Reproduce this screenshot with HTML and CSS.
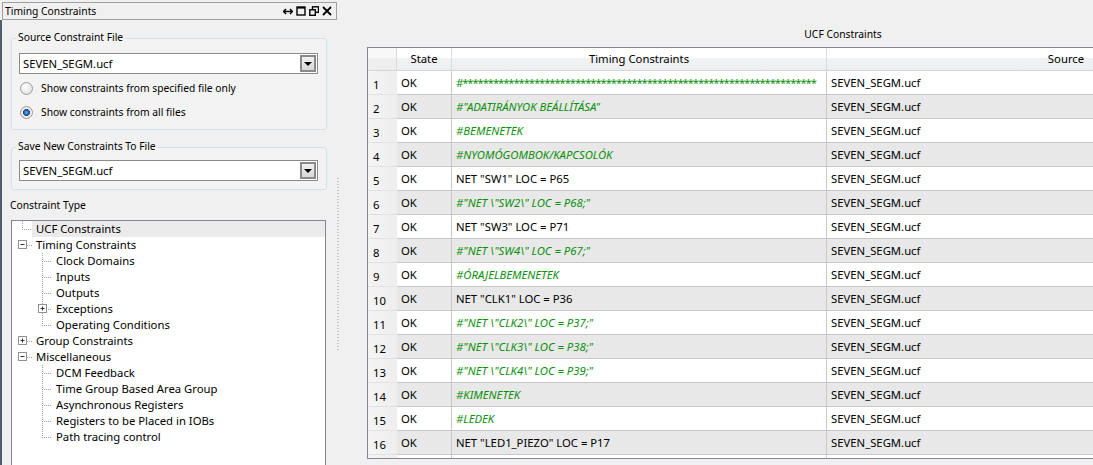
FILE: index.html
```html
<!DOCTYPE html>
<html lang="en">
<head>
  <meta charset="UTF-8" />
  <title>Timing Constraints</title>
  <link rel="stylesheet" href="styles.css">
</head>
<body>
  <div class="app">
    <aside class="dock">
      <div class="dock-title">
        <span>Timing Constraints</span>
        <span class="dock-btns">
          <svg width="10" height="9" viewBox="0 0 10 9"><path d="M0.5 4.5h9M3 2L0.5 4.5 3 7M7 2l2.5 2.5L7 7" fill="none" stroke="#000" stroke-width="1.4"/></svg>
          <svg width="10" height="10" viewBox="0 0 10 10"><rect x="1" y="1" width="8" height="8" fill="none" stroke="#000" stroke-width="1.4"/><path d="M1 1.8h8" stroke="#000" stroke-width="1.6"/></svg>
          <svg width="10" height="10" viewBox="0 0 10 10"><rect x="3.5" y="0.8" width="6" height="5.5" fill="none" stroke="#000" stroke-width="1.4"/><rect x="0.8" y="3.8" width="5.5" height="5.5" fill="#f0f0f0" stroke="#000" stroke-width="1.4"/></svg>
          <svg width="10" height="10" viewBox="0 0 10 10"><path d="M1 1l8 8M9 1L1 9" stroke="#000" stroke-width="1.8"/></svg>
        </span>
      </div>
      <div class="dock-body">
        <fieldset class="group">
          <legend>Source Constraint File</legend>
          <div class="combo"><span>SEVEN_SEGM.ucf</span><span class="combo-btn"></span></div>
          <label class="radio-row"><span class="radio"></span>Show constraints from specified file only</label>
          <label class="radio-row"><span class="radio checked"></span>Show constraints from all files</label>
        </fieldset>
        <fieldset class="group">
          <legend>Save New Constraints To File</legend>
          <div class="combo"><span>SEVEN_SEGM.ucf</span><span class="combo-btn"></span></div>
        </fieldset>
        <div class="section-label">Constraint Type</div>
        <div class="tree">
          <div class="node sel"><span class="cell end"></span><span class="label">UCF Constraints</span></div>
          <div class="node"><span class="cell root"><svg class="box" width="20" height="16"><rect x="6.5" y="3.5" width="8" height="8" fill="#fff" stroke="#919191"/><path d="M8.5 7.5h4" stroke="#333"/></svg></span><span class="label">Timing Constraints</span></div>
          <div class="node"><span class="cell"></span><span class="cell tee"></span><span class="label">Clock Domains</span></div>
          <div class="node"><span class="cell"></span><span class="cell tee"></span><span class="label">Inputs</span></div>
          <div class="node"><span class="cell"></span><span class="cell tee"></span><span class="label">Outputs</span></div>
          <div class="node"><span class="cell"></span><span class="cell tee"><svg class="box" width="20" height="16"><rect x="6.5" y="3.5" width="8" height="8" fill="#fff" stroke="#919191"/><path d="M8.5 7.5h4M10.5 5.5v4" stroke="#333"/></svg></span><span class="label">Exceptions</span></div>
          <div class="node"><span class="cell"></span><span class="cell end"></span><span class="label">Operating Conditions</span></div>
          <div class="node"><span class="cell root"><svg class="box" width="20" height="16"><rect x="6.5" y="3.5" width="8" height="8" fill="#fff" stroke="#919191"/><path d="M8.5 7.5h4M10.5 5.5v4" stroke="#333"/></svg></span><span class="label">Group Constraints</span></div>
          <div class="node"><span class="cell root"><svg class="box" width="20" height="16"><rect x="6.5" y="3.5" width="8" height="8" fill="#fff" stroke="#919191"/><path d="M8.5 7.5h4" stroke="#333"/></svg></span><span class="label">Miscellaneous</span></div>
          <div class="node"><span class="cell"></span><span class="cell tee"></span><span class="label">DCM Feedback</span></div>
          <div class="node"><span class="cell"></span><span class="cell tee"></span><span class="label">Time Group Based Area Group</span></div>
          <div class="node"><span class="cell"></span><span class="cell tee"></span><span class="label">Asynchronous Registers</span></div>
          <div class="node"><span class="cell"></span><span class="cell tee"></span><span class="label">Registers to be Placed in IOBs</span></div>
          <div class="node"><span class="cell"></span><span class="cell end"></span><span class="label">Path tracing control</span></div>
        </div>
      </div>
    </aside>

    <div class="splitter"><div class="grip"></div></div>

    <main class="ucf">
      <div class="ucf-title">UCF Constraints</div>
      <div class="grid-wrap">
        <table class="grid">
          <colgroup>
            <col style="width:29px"><col style="width:55px"><col style="width:375px"><col>
          </colgroup>
          <thead>
            <tr><th class="corner"></th><th>State</th><th>Timing Constraints</th><th>Source</th></tr>
          </thead>
          <tbody>
            <tr><th>1</th><td>OK</td><td class="cmt stars">#*********************************************************************</td><td>SEVEN_SEGM.ucf</td></tr>
            <tr><th>2</th><td>OK</td><td class="cmt">#"ADATIRÁNYOK BEÁLLÍTÁSA"</td><td>SEVEN_SEGM.ucf</td></tr>
            <tr><th>3</th><td>OK</td><td class="cmt">#BEMENETEK</td><td>SEVEN_SEGM.ucf</td></tr>
            <tr><th>4</th><td>OK</td><td class="cmt">#NYOMÓGOMBOK/KAPCSOLÓK</td><td>SEVEN_SEGM.ucf</td></tr>
            <tr><th>5</th><td>OK</td><td>NET "SW1" LOC = P65</td><td>SEVEN_SEGM.ucf</td></tr>
            <tr><th>6</th><td>OK</td><td class="cmt">#"NET \"SW2\" LOC = P68;"</td><td>SEVEN_SEGM.ucf</td></tr>
            <tr><th>7</th><td>OK</td><td>NET "SW3" LOC = P71</td><td>SEVEN_SEGM.ucf</td></tr>
            <tr><th>8</th><td>OK</td><td class="cmt">#"NET \"SW4\" LOC = P67;"</td><td>SEVEN_SEGM.ucf</td></tr>
            <tr><th>9</th><td>OK</td><td class="cmt">#ÓRAJELBEMENETEK</td><td>SEVEN_SEGM.ucf</td></tr>
            <tr><th>10</th><td>OK</td><td>NET "CLK1" LOC = P36</td><td>SEVEN_SEGM.ucf</td></tr>
            <tr><th>11</th><td>OK</td><td class="cmt">#"NET \"CLK2\" LOC = P37;"</td><td>SEVEN_SEGM.ucf</td></tr>
            <tr><th>12</th><td>OK</td><td class="cmt">#"NET \"CLK3\" LOC = P38;"</td><td>SEVEN_SEGM.ucf</td></tr>
            <tr><th>13</th><td>OK</td><td class="cmt">#"NET \"CLK4\" LOC = P39;"</td><td>SEVEN_SEGM.ucf</td></tr>
            <tr><th>14</th><td>OK</td><td class="cmt">#KIMENETEK</td><td>SEVEN_SEGM.ucf</td></tr>
            <tr><th>15</th><td>OK</td><td class="cmt">#LEDEK</td><td>SEVEN_SEGM.ucf</td></tr>
            <tr><th>16</th><td>OK</td><td>NET "LED1_PIEZO" LOC = P17</td><td>SEVEN_SEGM.ucf</td></tr>
            <tr class="partial"><th></th><td></td><td></td><td></td></tr>
          </tbody>
        </table>
      </div>
    </main>
  </div>
</body>
</html>
```

FILE: styles.css
```css
* {
  margin: 0;
  padding: 0;
  box-sizing: border-box;
}

body {
  width: 1093px;
  height: 465px;
  overflow: hidden;
  background: #f0f0f0;
  color: #000;
  font-family: "Noto Sans", "Open Sans", sans-serif;
  font-size: 11.3px;
  line-height: 16px;
}

.app {
  display: flex;
  height: 465px;
}

/* smaller widget text */
.dock-title,
.group legend,
.radio-row,
.section-label,
.ucf-title {
  font-size: 10.3px;
}

/* left dock */
.dock {
  width: 337px;
  flex: none;
  display: flex;
  flex-direction: column;
}

.dock-title {
  display: flex;
  justify-content: space-between;
  align-items: center;
  height: 18px;
  margin: 2px 0 0 2px;
  padding: 0 4px 0 2px;
  border: 1px solid #a0a0a0;
}

.dock-btns {
  display: flex;
  gap: 3px;
  align-items: center;
}

.dock-btns svg {
  display: block;
}

.dock-body {
  flex: 1;
  border-left: 2px solid #4f5d6e;
  padding: 9px 10px 0 9px;
  display: flex;
  flex-direction: column;
}

.group {
  border: 1px solid #d5dfe5;
  border-radius: 3px;
  background: #f3f3f3;
  padding: 0 8px 5px 7px;
  margin-bottom: 8px;
}

.group + .group {
  padding-bottom: 8px;
}

.group legend {
  margin-left: -3px;
  padding: 0 2px 2px;
  line-height: 16px;
}

.combo {
  display: flex;
  justify-content: space-between;
  align-items: center;
  height: 21px;
  margin-top: 6px;
  padding: 0 1px 0 3px;
  background: #fff;
  border: 1px solid #8b8b8b;
}

.group + .group .combo {
  margin-top: 4px;
}

.combo-btn {
  width: 16px;
  height: 17px;
  border: 2px solid #8a8a8a;
  background: linear-gradient(#f2f2f2, #d8d8d8);
  display: flex;
  align-items: center;
  justify-content: center;
}

.combo-btn::after {
  content: "";
  border-left: 4px solid transparent;
  border-right: 4px solid transparent;
  border-top: 4px solid #000;
}

.radio-row {
  display: flex;
  align-items: center;
  height: 24px;
  gap: 8px;
  padding-left: 1px;
}

.radio-row:first-of-type {
  margin-top: 2px;
}

.radio {
  width: 13px;
  height: 13px;
  border-radius: 50%;
  border: 1px solid #9a9a9a;
  background: radial-gradient(circle at 40% 35%, #fff 0, #e4e4e4 70%, #d0d0d0 100%);
  flex: none;
}

.radio.checked {
  background: radial-gradient(circle, #5ab0ee 0, #1a63b8 2.6px, #2a3c5a 3.2px, #f2f2f2 3.8px, #e0e0e0 100%);
}

.section-label {
  margin: -1px 0 7px -1px;
}

/* tree */
.tree {
  flex: 1;
  background: #fff;
  border: 1px solid #828790;
  border-bottom: none;
  margin-right: 1px;
}

.node {
  display: flex;
  height: 16px;
}

.node .label {
  flex: 1;
  padding-left: 4px;
  white-space: nowrap;
}

.node.sel .label {
  background: #ebebeb;
}

.cell {
  width: 20px;
  height: 16px;
  flex: none;
  background-repeat: no-repeat;
}

.cell .box {
  display: block;
}

.tee, .end {
  background-image:
    repeating-linear-gradient(to bottom, #a0a0a0 0 1px, transparent 1px 2px),
    repeating-linear-gradient(to right, #a0a0a0 0 1px, transparent 1px 2px);
  background-size: 1px 100%, 10px 1px;
  background-position: 10px 0, 12px 8px;
}

.end {
  background-size: 1px 9px, 10px 1px;
}

.root {
  background-image: repeating-linear-gradient(to right, #a0a0a0 0 1px, transparent 1px 2px);
  background-size: 6px 1px;
  background-position: 15px 8px;
}

/* splitter */
.splitter {
  width: 30px;
  flex: none;
  padding-top: 178px;
}

.grip {
  width: 2px;
  height: 174px;
  background: repeating-linear-gradient(to bottom, #c4c4c4 0 1px, transparent 1px 3px);
}

/* ucf table */
.ucf {
  width: 952px;
  flex: none;
  display: flex;
  flex-direction: column;
}

.ucf-title {
  text-align: center;
  margin-top: 26px;
  margin-bottom: 5px;
}

.grid-wrap {
  height: 412px;
  overflow: hidden;
  border: 1px solid #828790;
  background: #fff;
}

.grid {
  width: 938px;
  table-layout: fixed;
  border-collapse: separate;
  border-spacing: 0;
}

.grid thead th {
  height: 23px;
  font-weight: normal;
  text-align: center;
  background: linear-gradient(#fff 0, #fff 45%, #f1f2f4 45%, #eceef0 100%);
  border-right: 1px solid #dcdcdc;
  border-bottom: 1px solid #d5d5d5;
}

.grid thead th.corner {
  background: linear-gradient(#f8f8f8 0, #f8f8f8 45%, #eeeeee 45%);
}

.grid td,
.grid tbody th {
  height: 24px;
  padding: 0 4px;
  text-align: left;
  font-weight: normal;
  white-space: nowrap;
  overflow: hidden;
  text-overflow: clip;
  border-bottom: 1px solid #c9c9c9;
  border-right: 1px solid #c9c9c9;
}

.grid tbody th {
  padding-left: 5px;
  background: linear-gradient(to right, #f4f4f4, #eeeeee);
  border-right: none;
  border-bottom-color: #e2e2e2;
  padding-top: 4px;
}

.grid td {
  padding-top: 1px;
}

.grid tbody tr:nth-child(even) td {
  background: #e8e8e8;
}

.grid td.cmt {
  color: #0a8f0a;
  font-style: italic;
}

.grid td.stars {
  font-style: normal;
  letter-spacing: -1.1px;
}
```
